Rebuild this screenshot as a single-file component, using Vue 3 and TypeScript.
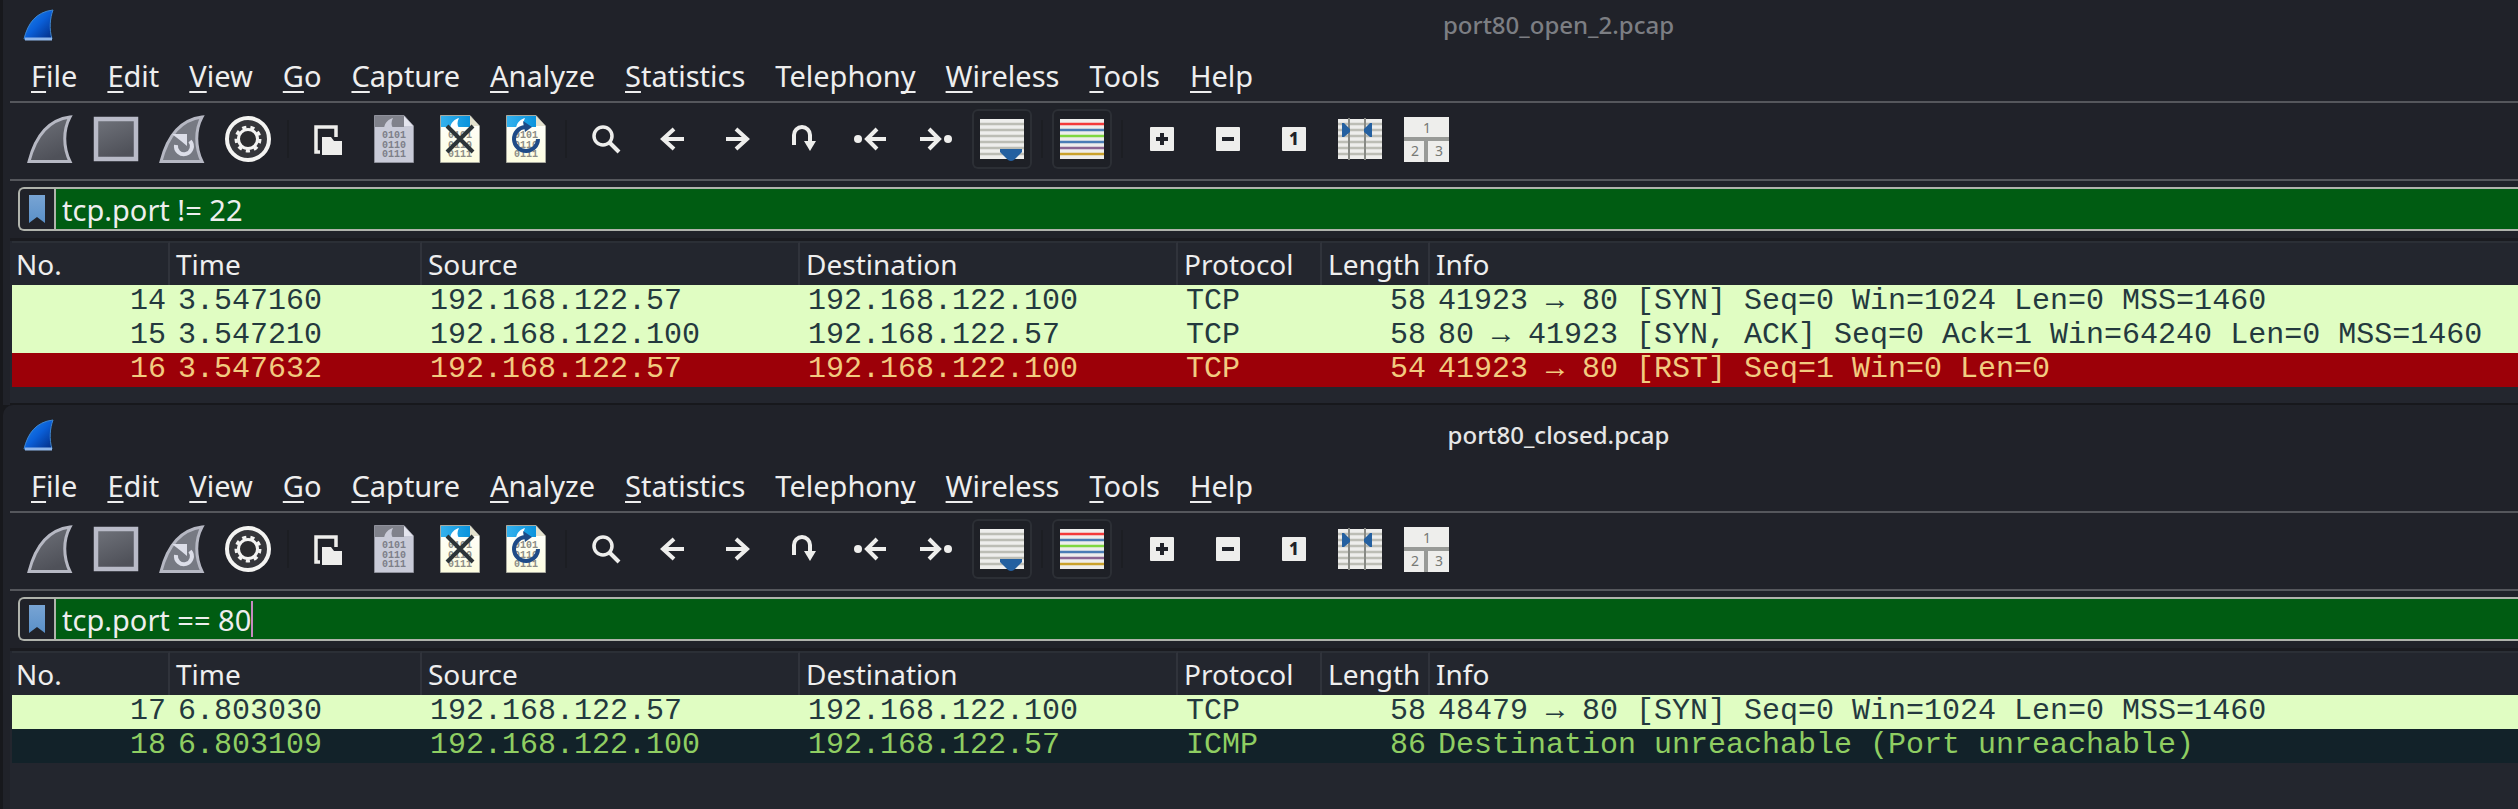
<script setup lang="ts">
interface MenuEntry {
  before: string
  key: string
  after: string
}

interface Mark {
  x: number
  y: number
  value: string
}

interface ToolButton {
  icon: string
  label: string
  checked?: boolean
  marks?: Mark[]
  markClass?: string
  overlay?: string
}

interface Packet {
  no: number
  time: string
  source: string
  destination: string
  protocol: string
  length: number
  info: string
  tone: 'tcp' | 'reset' | 'icmp'
}

interface CaptureWindow {
  id: string
  title: string
  active: boolean
  filter: string
  packets: Packet[]
}

const menus: MenuEntry[] = [
  { before: '', key: 'F', after: 'ile' },
  { before: '', key: 'E', after: 'dit' },
  { before: '', key: 'V', after: 'iew' },
  { before: '', key: 'G', after: 'o' },
  { before: '', key: 'C', after: 'apture' },
  { before: '', key: 'A', after: 'nalyze' },
  { before: '', key: 'S', after: 'tatistics' },
  { before: 'Telephon', key: 'y', after: '' },
  { before: '', key: 'W', after: 'ireless' },
  { before: '', key: 'T', after: 'ools' },
  { before: '', key: 'H', after: 'elp' },
]

const bits: Mark[] = [
  { x: 30, y: 29, value: '0101' },
  { x: 30, y: 39, value: '0110' },
  { x: 30, y: 48, value: '0111' },
]

const toolGroups: ToolButton[][] = [
  [
    { icon: 'start', label: 'Start capturing packets' },
    { icon: 'stop', label: 'Stop capturing packets' },
    { icon: 'restart', label: 'Restart current capture' },
    { icon: 'options', label: 'Capture options' },
  ],
  [
    { icon: 'open', label: 'Open a capture file' },
    { icon: 'paper-off', label: 'Save this capture file', marks: bits, markClass: 'bits' },
    { icon: 'paper', label: 'Close this capture file', marks: bits, markClass: 'bits', overlay: 'cross' },
    { icon: 'paper', label: 'Reload this file', marks: bits, markClass: 'bits', overlay: 'turn' },
  ],
  [
    { icon: 'find', label: 'Find a packet' },
    { icon: 'back', label: 'Go to the previous packet' },
    { icon: 'forward', label: 'Go to the next packet' },
    { icon: 'goto', label: 'Go to specified packet' },
    { icon: 'first', label: 'Go to the first packet' },
    { icon: 'last', label: 'Go to the last packet' },
    { icon: 'autoscroll', label: 'Auto scroll in live capture', checked: true },
  ],
  [{ icon: 'colorize', label: 'Colorize packet list', checked: true }],
  [
    { icon: 'zoom-in', label: 'Enlarge text' },
    { icon: 'zoom-out', label: 'Shrink text' },
    { icon: 'tile', label: 'Normal size text', marks: [{ x: 30, y: 36, value: '1' }], markClass: 'one' },
    { icon: 'resize', label: 'Resize columns to fit' },
    {
      icon: 'layout',
      label: 'Reset layout',
      marks: [
        { x: 31, y: 24, value: '1' },
        { x: 19, y: 47, value: '2' },
        { x: 43, y: 47, value: '3' },
      ],
      markClass: 'pane',
    },
  ],
]

const columns = ['No.', 'Time', 'Source', 'Destination', 'Protocol', 'Length', 'Info']

const windows: CaptureWindow[] = [
  {
    id: 'open',
    title: 'port80_open_2.pcap',
    active: false,
    filter: 'tcp.port != 22',
    packets: [
      { no: 14, time: '3.547160', source: '192.168.122.57', destination: '192.168.122.100', protocol: 'TCP', length: 58, info: '41923 → 80 [SYN] Seq=0 Win=1024 Len=0 MSS=1460', tone: 'tcp' },
      { no: 15, time: '3.547210', source: '192.168.122.100', destination: '192.168.122.57', protocol: 'TCP', length: 58, info: '80 → 41923 [SYN, ACK] Seq=0 Ack=1 Win=64240 Len=0 MSS=1460', tone: 'tcp' },
      { no: 16, time: '3.547632', source: '192.168.122.57', destination: '192.168.122.100', protocol: 'TCP', length: 54, info: '41923 → 80 [RST] Seq=1 Win=0 Len=0', tone: 'reset' },
    ],
  },
  {
    id: 'closed',
    title: 'port80_closed.pcap',
    active: true,
    filter: 'tcp.port == 80',
    packets: [
      { no: 17, time: '6.803030', source: '192.168.122.57', destination: '192.168.122.100', protocol: 'TCP', length: 58, info: '48479 → 80 [SYN] Seq=0 Win=1024 Len=0 MSS=1460', tone: 'tcp' },
      { no: 18, time: '6.803109', source: '192.168.122.100', destination: '192.168.122.57', protocol: 'ICMP', length: 86, info: 'Destination unreachable (Port unreachable)', tone: 'icmp' },
    ],
  },
]
</script>

<template>
  <svg class="sprite" width="0" height="0" aria-hidden="true">
    <defs>
      <linearGradient id="g-logo" x1="0" y1="0" x2="1" y2="1">
        <stop offset="0" stop-color="#1f8bf0" />
        <stop offset="0.5" stop-color="#0a5fd8" />
        <stop offset="1" stop-color="#022a80" />
      </linearGradient>
      <linearGradient id="g-grey" x1="0" y1="0" x2="0.4" y2="1">
        <stop offset="0" stop-color="#70737b" />
        <stop offset="1" stop-color="#4f5159" />
      </linearGradient>
      <linearGradient id="g-sky" x1="0" y1="0" x2="1" y2="0">
        <stop offset="0" stop-color="#35b2ee" />
        <stop offset="1" stop-color="#0a93dc" />
      </linearGradient>
      <linearGradient id="g-paper" x1="0" y1="0" x2="0" y2="1">
        <stop offset="0" stop-color="#ffffff" />
        <stop offset="1" stop-color="#fdfde0" />
      </linearGradient>
      <linearGradient id="g-mark" x1="0" y1="0" x2="0" y2="1">
        <stop offset="0" stop-color="#78a4d4" />
        <stop offset="1" stop-color="#5a90c8" />
      </linearGradient>
    </defs>

    <symbol id="i-logo" viewBox="0 0 32 32">
      <path d="M1 30C5 14 13 3 30 1C27 9 26 20 29 30Z" fill="url(#g-logo)" stroke="#3f86cf" stroke-width="1" />
      <path d="M2 30H29" stroke="#8fb6ea" stroke-width="3" />
    </symbol>

    <symbol id="i-start" viewBox="0 0 60 60">
      <path d="M9 52.500C15 29 27 11 50 8C43 21 43 38 50 52.500Z" fill="url(#g-grey)" stroke="#b6b8c3" stroke-width="3" />
    </symbol>
    <symbol id="i-stop" viewBox="0 0 60 60">
      <rect x="10" y="10" width="40" height="40" fill="url(#g-grey)" stroke="#b9bbc8" stroke-width="4.500" />
    </symbol>
    <symbol id="i-restart" viewBox="0 0 60 60">
      <path d="M9 52.500C15 29 27 11 50 8C43 21 43 38 50 52.500Z" fill="#777a83" stroke="#b6b8c3" stroke-width="3" />
      <path d="M24 36A8 8 0 1 0 38 32" fill="none" stroke="#dcdee8" stroke-width="4" />
      <path d="M20 25H35V37L29 32Z" fill="#dcdee8" />
    </symbol>
    <symbol id="i-options" viewBox="0 0 60 60">
      <circle cx="30" cy="30" r="21" fill="#35363a" stroke="#f4f4f2" stroke-width="4" />
      <circle cx="30" cy="30" r="12" fill="none" stroke="#f4f4f2" stroke-width="3" stroke-dasharray="4.200 4.178" />
      <circle cx="30" cy="30" r="9.500" fill="#2b2c2e" stroke="#f4f4f2" stroke-width="3" />
    </symbol>
    <symbol id="i-open" viewBox="0 0 60 60">
      <path d="M22 43H18V18H38V28" fill="none" stroke="#eeeeec" stroke-width="3.500" />
      <path d="M24 46V28H33L36 32H44V46Z" fill="#eeeeec" />
    </symbol>
    <symbol id="i-paper-off" viewBox="0 0 60 60">
      <path d="M10.500 6.500H40L49.500 17V53.500H10.500Z" fill="#c9cbd8" stroke="#8f919b" />
      <path d="M11 7H40V18H11Z" fill="#80828b" />
      <path d="M20 19C21 13 25 10 29 9C27 13 27 16 29 19Z" fill="#c9cbd8" />
      <path d="M40 7V17H49Z" fill="#e4e5ee" />
    </symbol>
    <symbol id="i-paper" viewBox="0 0 60 60">
      <path d="M10.500 6.500H40L49.500 17V53.500H10.500Z" fill="url(#g-paper)" stroke="#a9aaa0" />
      <path d="M11 7H40V18H11Z" fill="url(#g-sky)" />
      <path d="M20 19C21 13 25 10 29 9C27 13 27 16 29 19Z" fill="#ffffff" />
      <path d="M40 7V17H49Z" fill="#e3e1cd" />
    </symbol>
    <symbol id="i-cross" viewBox="0 0 60 60">
      <path d="M17 17L43 43M43 17L17 43" stroke="#2c3438" stroke-width="4" />
    </symbol>
    <symbol id="i-turn" viewBox="0 0 60 60">
      <path d="M42 30A12 12 0 1 1 29 18" fill="none" stroke="#1f4b87" stroke-width="4" />
      <path d="M27 12L36 18L29 23Z" fill="#1f4b87" />
    </symbol>
    <symbol id="i-find" viewBox="0 0 60 60">
      <circle cx="27" cy="27" r="9" fill="none" stroke="#eeeeec" stroke-width="3.500" />
      <path d="M33.500 33.500L43 43" stroke="#eeeeec" stroke-width="4" />
    </symbol>
    <symbol id="i-back" viewBox="0 0 60 60">
      <path d="M42 30H21M32 20L21 30L32 40" fill="none" stroke="#eeeeec" stroke-width="4" />
    </symbol>
    <symbol id="i-forward" viewBox="0 0 60 60">
      <path d="M18 30H39M28 20L39 30L28 40" fill="none" stroke="#eeeeec" stroke-width="4" />
    </symbol>
    <symbol id="i-goto" viewBox="0 0 60 60">
      <path d="M20 36V26A8 8 0 0 1 36 26V34" fill="none" stroke="#eeeeec" stroke-width="4" />
      <path d="M30 32H42L36 42Z" fill="#eeeeec" />
    </symbol>
    <symbol id="i-first" viewBox="0 0 60 60">
      <circle cx="18" cy="30" r="4" fill="#eeeeec" />
      <path d="M46 30H28M37 20L27 30L37 40" fill="none" stroke="#eeeeec" stroke-width="4" />
    </symbol>
    <symbol id="i-last" viewBox="0 0 60 60">
      <circle cx="42" cy="30" r="4" fill="#eeeeec" />
      <path d="M14 30H32M23 20L33 30L23 40" fill="none" stroke="#eeeeec" stroke-width="4" />
    </symbol>
    <symbol id="i-autoscroll" viewBox="0 0 60 60">
      <rect x="8" y="10" width="44" height="40" fill="#eeeeec" />
      <path d="M8 15H52M8 21H52M8 27H52M8 33H52M8 39H52M8 45H52" stroke="#bcbdb5" stroke-width="2.500" />
      <path d="M28 40H50V43L42 51Q39 53 36 51L28 43Z" fill="#2460a0" />
    </symbol>
    <symbol id="i-colorize" viewBox="0 0 60 60">
      <rect x="8" y="10" width="44" height="40" fill="#eeeeec" />
      <g stroke-width="2.500">
        <path d="M8 15H52" stroke="#f23a3a" />
        <path d="M8 21H52" stroke="#4a7cb5" />
        <path d="M8 27H52" stroke="#7fd740" />
        <path d="M8 33H52" stroke="#4a7cb5" />
        <path d="M8 39H52" stroke="#8a6592" />
        <path d="M8 45H52" stroke="#caa22c" />
      </g>
    </symbol>
    <symbol id="i-zoom-in" viewBox="0 0 60 60">
      <rect x="18" y="18" width="24" height="24" rx="1" fill="#eeeeec" />
      <path d="M24 30H36M30 24V36" stroke="#202229" stroke-width="4" />
    </symbol>
    <symbol id="i-zoom-out" viewBox="0 0 60 60">
      <rect x="18" y="18" width="24" height="24" rx="1" fill="#eeeeec" />
      <path d="M24 30H36" stroke="#202229" stroke-width="4" />
    </symbol>
    <symbol id="i-tile" viewBox="0 0 60 60">
      <rect x="18" y="18" width="24" height="24" rx="1" fill="#eeeeec" />
    </symbol>
    <symbol id="i-resize" viewBox="0 0 60 60">
      <rect x="8" y="10" width="44" height="40" fill="#eeeeec" />
      <path d="M8 15H52M8 21H52M8 27H52M8 33H52M8 39H52M8 45H52" stroke="#bcbdb5" stroke-width="2.500" />
      <path d="M19 9V51M35 9V51" stroke="#888a85" stroke-width="2" />
      <path d="M12 14H14L20 20V23L14 28H12ZM42 14H40L34 20V23L40 28H42Z" fill="#2460a0" />
    </symbol>
    <symbol id="i-layout" viewBox="0 0 60 60">
      <rect x="8" y="8" width="45" height="45" fill="#eeeeec" />
      <path d="M8 30H53M30 30V53" stroke="#989a97" stroke-width="4" />
    </symbol>
    <symbol id="i-bookmark" viewBox="0 0 16 28">
      <path d="M0 0H16V28L8 22L0 28Z" fill="url(#g-mark)" />
    </symbol>
  </svg>

  <main class="desktop">
    <section
      v-for="win in windows"
      :key="win.id"
      class="window"
      :class="{ active: win.active }"
      :aria-label="win.title"
    >
      <header class="titlebar">
        <svg class="logo" aria-hidden="true"><use href="#i-logo" /></svg>
        <h1 class="title">{{ win.title }}</h1>
      </header>

      <nav class="menubar" aria-label="Main menu">
        <button v-for="menu in menus" :key="menu.before + menu.key + menu.after" type="button" class="menu">
          {{ menu.before }}<span class="key">{{ menu.key }}</span>{{ menu.after }}
        </button>
      </nav>

      <div class="toolbar" role="toolbar" aria-label="Main toolbar">
        <div v-for="(group, index) in toolGroups" :key="index" class="group">
          <button
            v-for="tool in group"
            :key="tool.label"
            type="button"
            class="tool"
            :class="{ checked: tool.checked }"
            :aria-label="tool.label"
          >
            <svg class="glyph" viewBox="0 0 60 60" aria-hidden="true">
              <use :href="'#i-' + tool.icon" width="60" height="60" />
              <text
                v-for="(mark, place) in tool.marks"
                :key="place"
                :class="[tool.markClass, { faint: tool.icon === 'paper-off' }]"
                :x="mark.x"
                :y="mark.y"
                text-anchor="middle"
              >{{ mark.value }}</text>
              <use v-if="tool.overlay" :href="'#i-' + tool.overlay" width="60" height="60" />
            </svg>
          </button>
        </div>
      </div>

      <div class="filter">
        <button type="button" class="bookmark" aria-label="Filter bookmarks">
          <svg class="ribbon" aria-hidden="true"><use href="#i-bookmark" /></svg>
        </button>
        <label class="expression">
          <input class="text" type="text" aria-label="Display filter" :value="win.filter" size="14" spellcheck="false" />
          <span v-if="win.active" class="caret"></span>
        </label>
      </div>

      <div class="list">
        <table class="packets">
          <colgroup>
            <col class="c-no" />
            <col class="c-time" />
            <col class="c-address" />
            <col class="c-address" />
            <col class="c-protocol" />
            <col class="c-length" />
            <col />
          </colgroup>
          <thead>
            <tr>
              <th v-for="column in columns" :key="column" scope="col">{{ column }}</th>
            </tr>
          </thead>
          <tbody>
            <tr v-for="packet in win.packets" :key="packet.no" :class="packet.tone">
              <td class="number">{{ packet.no }}</td>
              <td>{{ packet.time }}</td>
              <td>{{ packet.source }}</td>
              <td>{{ packet.destination }}</td>
              <td>{{ packet.protocol }}</td>
              <td class="number">{{ packet.length }}</td>
              <td>{{ packet.info }}</td>
            </tr>
          </tbody>
        </table>
      </div>
    </section>
  </main>
</template>

<style>
body {
  background: #17181c;
}
</style>

<style scoped>
.sprite {
  position: absolute;
}

.desktop {
  display: flex;
  flex-direction: column;
  box-sizing: border-box;
  min-height: 100vh;
  padding-left: 3px;
  overflow: hidden;
  color: #eeeeee;
  font-family: 'Noto Sans', sans-serif;
  font-size: 28px;
}

/* The rear window's top edge runs off the screen. */
.window {
  display: flex;
  flex-direction: column;
  margin-top: -5px;
  background: #202229;
}

.window.active {
  flex: 1;
  margin-top: 0;
  border-top-left-radius: 10px;
}

.titlebar {
  display: flex;
  align-items: center;
  height: 60px;
  padding-left: 20px;
}

.logo {
  width: 32px;
  height: 32px;
}

.title {
  flex: 1;
  margin: 0;
  padding-left: 544px;
  color: #7c7e83;
  font-size: 24px;
  font-weight: 500;
  line-height: 32px;
  text-align: center;
}

.active .title {
  color: #e6e6e6;
}

.menubar {
  display: flex;
  gap: 30px;
  height: 46px;
  margin-left: 7px;
  padding-left: 21px;
  border-bottom: 2px solid #55575c;
}

button {
  padding: 0;
  border: 0;
  background: none;
  color: inherit;
  font: inherit;
}

.menu {
  height: 42px;
  font-size: 29px;
  line-height: 42px;
  white-space: nowrap;
}

.key {
  text-decoration: underline;
  text-decoration-thickness: 2px;
  text-underline-offset: 4px;
  text-decoration-skip-ink: none;
}

.toolbar {
  display: flex;
  height: 72px;
  margin-left: 7px;
  padding: 0 0 4px 7px;
  border-bottom: 2px solid #55575c;
}

.group {
  display: flex;
  align-items: center;
}

.group + .group::before {
  content: '';
  width: 2px;
  height: 38px;
  margin: 0 6px;
  background: #1c1e23;
}

.tool {
  box-sizing: border-box;
  width: 60px;
  height: 60px;
  margin: 0 3px;
  border-radius: 6px;
}

.tool.checked {
  box-shadow: inset 0 0 0 2px #2c2f35;
  background: #1e2026;
}

.glyph {
  display: block;
  width: 60px;
  height: 60px;
}

.bits {
  fill: #8d8d85;
  font-family: 'Liberation Mono', monospace;
  font-size: 10px;
  font-weight: 700;
}

.bits.faint {
  fill: #7d7f88;
}

.one {
  fill: #202229;
  font-size: 17px;
  font-weight: 800;
}

.pane {
  fill: #777975;
  font-size: 14px;
}

.filter {
  display: flex;
  height: 40px;
  margin: 6px 0 7px 15px;
  border: 2px solid #b0b3ac;
  border-right: 0;
  border-radius: 6px 0 0 6px;
  overflow: hidden;
}

.bookmark {
  display: flex;
  align-items: center;
  justify-content: center;
  width: 36px;
  border-right: 2px solid #b0b3ac;
}

.ribbon {
  width: 16px;
  height: 28px;
}

.expression {
  display: flex;
  flex: 1;
  align-items: center;
  padding-left: 6px;
  background: #005c12;
}

.text {
  field-sizing: content;
  padding: 0;
  border: 0;
  outline: 0;
  background: none;
  color: #eeeeee;
  font: inherit;
  font-size: 29px;
}

.caret {
  width: 2px;
  height: 36px;
  background: #c58ac0;
}

.list {
  flex: 1;
  margin-left: 7px;
  padding-left: 2px;
  border-top: 3px solid #1a1b20;
  background: #23262e;
}

.window:not(.active) .list {
  padding-bottom: 16px;
  border-bottom: 2px solid #17181c;
}

.packets {
  width: 100%;
  table-layout: fixed;
  border-spacing: 0;
}

.c-no {
  width: 158px;
}

.c-time {
  width: 252px;
}

.c-address {
  width: 378px;
}

.c-protocol {
  width: 144px;
}

.c-length {
  width: 108px;
}

th {
  box-sizing: border-box;
  height: 44px;
  padding: 0 0 0 6px;
  border-right: 2px solid #30333b;
  border-top: 2px solid #2b2f36;
  font-weight: 400;
  line-height: 40px;
  text-align: left;
  white-space: nowrap;
}

th:first-child {
  padding-left: 4px;
}

th:last-child {
  border-right: 0;
}

td {
  height: 34px;
  padding: 0 0 0 8px;
  font-family: 'Liberation Mono', monospace;
  font-size: 30px;
  line-height: 32px;
  vertical-align: top;
  white-space: nowrap;
}

td.number {
  padding: 0 4px 0 0;
  text-align: right;
}

.tcp td {
  background: #e0fdc2;
  color: #24393e;
}

.reset td {
  background: #9c0008;
  color: #f2cb80;
}

.icmp td {
  background: #122229;
  color: #8fce62;
}
</style>
